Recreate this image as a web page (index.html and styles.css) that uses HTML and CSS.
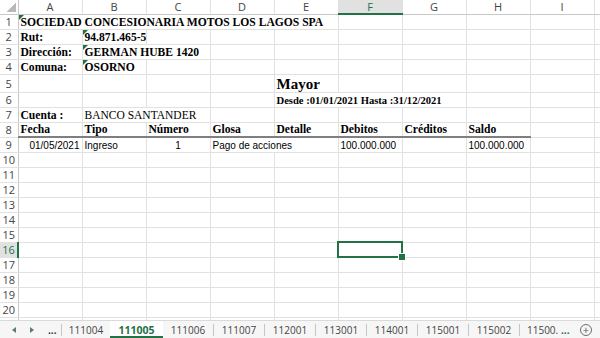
FILE: index.html
```html
<!doctype html>
<html lang="es">
<head>
	<meta charset="UTF-8">
	<title>Mayor - 111005</title>
	<link rel="stylesheet" href="styles.css">
</head>
<body>
	<div class="sheet">
		<table class="grid">
			<colgroup>
				<col class="c-row">
				<col class="c"><col class="c"><col class="c"><col class="c"><col class="c">
				<col class="c"><col class="c"><col class="c"><col class="c">
				<col class="c-end">
			</colgroup>
			<tr class="r-head">
				<th class="corner"></th>
				<th>A</th><th>B</th><th>C</th><th>D</th><th>E</th>
				<th class="sel">F</th><th>G</th><th>H</th><th>I</th>
				<th class="edge"></th>
			</tr>
			<tr>
				<th class="rn">1</th>
				<td colspan="5" class="b tri">SOCIEDAD CONCESIONARIA MOTOS LOS LAGOS SPA</td>
				<td></td><td></td><td></td><td></td><td class="edge"></td>
			</tr>
			<tr>
				<th class="rn">2</th>
				<td class="b">Rut:</td>
				<td class="b tri">94.871.465-5</td>
				<td></td><td></td><td></td><td></td><td></td><td></td><td></td><td class="edge"></td>
			</tr>
			<tr>
				<th class="rn">3</th>
				<td class="b">Dirección:</td>
				<td colspan="2" class="b tri">GERMAN HUBE 1420</td>
				<td></td><td></td><td></td><td></td><td></td><td></td><td class="edge"></td>
			</tr>
			<tr>
				<th class="rn">4</th>
				<td class="b">Comuna:</td>
				<td class="b tri">OSORNO</td>
				<td></td><td></td><td></td><td></td><td></td><td></td><td></td><td class="edge"></td>
			</tr>
			<tr class="r-tall">
				<th class="rn">5</th>
				<td></td><td></td><td></td><td></td>
				<td class="b title">Mayor</td>
				<td></td><td></td><td></td><td></td><td class="edge"></td>
			</tr>
			<tr>
				<th class="rn">6</th>
				<td></td><td></td><td></td><td></td>
				<td colspan="3" class="b small">Desde :01/01/2021 Hasta :31/12/2021</td>
				<td></td><td></td><td class="edge"></td>
			</tr>
			<tr>
				<th class="rn">7</th>
				<td class="b">Cuenta :</td>
				<td colspan="2" class="serif">BANCO SANTANDER</td>
				<td></td><td></td><td></td><td></td><td></td><td></td><td class="edge"></td>
			</tr>
			<tr class="r-cols">
				<th class="rn">8</th>
				<td class="b hl">Fecha</td>
				<td class="b hl">Tipo</td>
				<td class="b hl">Número</td>
				<td class="b hl">Glosa</td>
				<td class="b hl">Detalle</td>
				<td class="b hl">Debitos</td>
				<td class="b hl">Créditos</td>
				<td class="b hl">Saldo</td>
				<td></td><td class="edge"></td>
			</tr>
			<tr class="r-data">
				<th class="rn">9</th>
				<td class="num">01/05/2021</td>
				<td>Ingreso</td>
				<td class="mid">1</td>
				<td colspan="2">Pago de acciones</td>
				<td>100.000.000</td>
				<td></td>
				<td>100.000.000</td>
				<td></td><td class="edge"></td>
			</tr>
			<tr><th class="rn">10</th><td></td><td></td><td></td><td></td><td></td><td></td><td></td><td></td><td></td><td class="edge"></td></tr>
			<tr><th class="rn">11</th><td></td><td></td><td></td><td></td><td></td><td></td><td></td><td></td><td></td><td class="edge"></td></tr>
			<tr><th class="rn">12</th><td></td><td></td><td></td><td></td><td></td><td></td><td></td><td></td><td></td><td class="edge"></td></tr>
			<tr><th class="rn">13</th><td></td><td></td><td></td><td></td><td></td><td></td><td></td><td></td><td></td><td class="edge"></td></tr>
			<tr><th class="rn">14</th><td></td><td></td><td></td><td></td><td></td><td></td><td></td><td></td><td></td><td class="edge"></td></tr>
			<tr><th class="rn">15</th><td></td><td></td><td></td><td></td><td></td><td></td><td></td><td></td><td></td><td class="edge"></td></tr>
			<tr><th class="rn sel-row">16</th><td></td><td></td><td></td><td></td><td></td><td class="pick"></td><td></td><td></td><td></td><td class="edge"></td></tr>
			<tr><th class="rn">17</th><td></td><td></td><td></td><td></td><td></td><td></td><td></td><td></td><td></td><td class="edge"></td></tr>
			<tr><th class="rn">18</th><td></td><td></td><td></td><td></td><td></td><td></td><td></td><td></td><td></td><td class="edge"></td></tr>
			<tr><th class="rn">19</th><td></td><td></td><td></td><td></td><td></td><td></td><td></td><td></td><td></td><td class="edge"></td></tr>
			<tr><th class="rn">20</th><td></td><td></td><td></td><td></td><td></td><td></td><td></td><td></td><td></td><td class="edge"></td></tr>
			<tr><th class="rn">21</th><td></td><td></td><td></td><td></td><td></td><td></td><td></td><td></td><td></td><td class="edge"></td></tr>
		</table>
	</div>
	<div class="tabs">
		<div class="nav">
			<span class="arr arr-l"></span>
			<span class="arr arr-r"></span>
			<span class="dots">...</span>
		</div>
		<i class="sep"></i>
		<span class="tab first">111004</span>
		<span class="tab active">111005</span>
		<span class="tab">111006</span><i class="sep"></i>
		<span class="tab">111007</span><i class="sep"></i>
		<span class="tab">112001</span><i class="sep"></i>
		<span class="tab">113001</span><i class="sep"></i>
		<span class="tab">114001</span><i class="sep"></i>
		<span class="tab">115001</span><i class="sep"></i>
		<span class="tab">115002</span><i class="sep"></i>
		<span class="tab last">11500.</span>
		<span class="more">...</span>
		<span class="add">+</span>
	</div>
</body>
</html>
```

FILE: styles.css
```css
*{
	margin:0;
	padding:0;
	box-sizing:border-box;
}
html,body{
	width:600px;
	height:338px;
	overflow:hidden;
	background:#fff;
}
body{
	font-family:"Liberation Serif",serif;
	color:#000;
}
.sheet{
	height:320px;
	overflow:hidden;
}
.grid{
	border-collapse:collapse;
	table-layout:fixed;
	width:600px;
}
.c-row{width:18px;}
.c{width:64px;}
.c-end{width:6px;}
.grid td,
.grid th{
	border:1px solid #e1e1e1;
	height:15px;
	padding:0 2px;
	white-space:nowrap;
	overflow:hidden;
	vertical-align:bottom;
	font-size:11px;
	line-height:13px;
}
.grid td{
	font-family:"Liberation Sans",sans-serif;
	font-size:10px;
}
.grid td.serif{
	font-family:"Liberation Serif",serif;
	font-size:11.5px;
}
.grid td.b{
	font-family:"Liberation Serif",serif;
	font-weight:bold;
	font-size:11.6px;
}
.grid .r-head th{
	height:14px;
	font-family:"Open Sans",sans-serif;
	font-weight:normal;
	font-size:11px;
	line-height:12px;
	color:#444;
	text-align:center;
	vertical-align:middle;
	border-top:none;
	border-bottom:1px solid #c8c8c8;
}
.grid .r-head th.sel{
	background:#e1e1e1;
	color:#217346;
	border-bottom:2px solid #217346;
}
.grid th.corner{
	background:linear-gradient(135deg,#fff 55%,#b9b9b9 55%) no-repeat right 2px bottom 2px/11px 11px;
	border-left:none;
	border-right:1px solid #c8c8c8;
}
.grid th.rn{
	font-family:"Open Sans",sans-serif;
	font-weight:normal;
	font-size:11px;
	color:#444;
	text-align:center;
	vertical-align:middle;
	padding:0;
	border-left:none;
	border-right:1px solid #c8c8c8;
}
.grid th.sel-row{
	background:#e1e1e1;
	color:#217346;
	border-right:2px solid #217346;
}
.grid .edge{
	border-left:1px solid #d6d6d6;
	border-right:none;
	padding:0;
}
.grid .r-tall td,
.grid .r-tall th{
	height:18px;
}
.grid td.title{
	font-size:15px;
	line-height:16px;
	overflow:visible;
}
.grid td.small{
	font-size:10.6px;
}
.grid td.hl{
	border-bottom:2px solid #7f7f7f;
}
.grid td.num{
	text-align:right;
}
.grid td.mid{
	text-align:center;
}
.grid td.tri{
	position:relative;
}
.grid td.tri::before{
	content:"";
	position:absolute;
	left:0;
	top:0;
	width:0;
	height:0;
	border-top:5px solid #217346;
	border-right:5px solid transparent;
}
.grid td.pick{
	position:relative;
	overflow:visible;
	outline:2px solid #217346;
	outline-offset:-1px;
}
.grid td.pick::after{
	content:"";
	position:absolute;
	right:-4px;
	bottom:-4px;
	width:6px;
	height:6px;
	background:#217346;
	border:1px solid #fff;
	z-index:1;
}

/* hojas */
.tabs{
	height:18px;
	display:flex;
	align-items:center;
	background:#f6f6f6;
	border-top:1px solid #dadada;
	font-family:"Open Sans",sans-serif;
	font-size:10px;
	color:#444;
}
.nav{
	width:61px;
	height:100%;
	display:flex;
	align-items:center;
	padding-left:12px;
}
.arr{
	width:0;
	height:0;
	border-top:3px solid transparent;
	border-bottom:3px solid transparent;
}
.arr-l{
	border-right:4px solid #5b7d6b;
	margin-right:14px;
}
.arr-r{
	border-left:4px solid #5b7d6b;
	margin-right:14px;
}
.dots{
	font-weight:bold;
	color:#333;
	line-height:10px;
}
.sep{
	width:1px;
	height:12px;
	background:#c6c6c6;
}
.tab{
	width:50px;
	height:100%;
	display:flex;
	align-items:center;
	justify-content:center;
	white-space:nowrap;
}
.tab.first{
	width:48px;
}
.tab.active{
	width:53px;
	background:#fff;
	color:#217346;
	font-weight:bold;
	font-size:10.5px;
	border-bottom:2px solid #217346;
	padding-top:2px;
}
.tab.last{
	width:37px;
	justify-content:flex-start;
	padding-left:7px;
}
.more{
	margin-left:4px;
	width:14px;
	color:#217346;
	font-weight:bold;
	line-height:10px;
}
.add{
	margin-left:5px;
	width:12px;
	height:12px;
	border:1px solid #6e6e6e;
	border-radius:50%;
	display:flex;
	align-items:center;
	justify-content:center;
	font-size:11px;
	line-height:10px;
	color:#555;
}
```
